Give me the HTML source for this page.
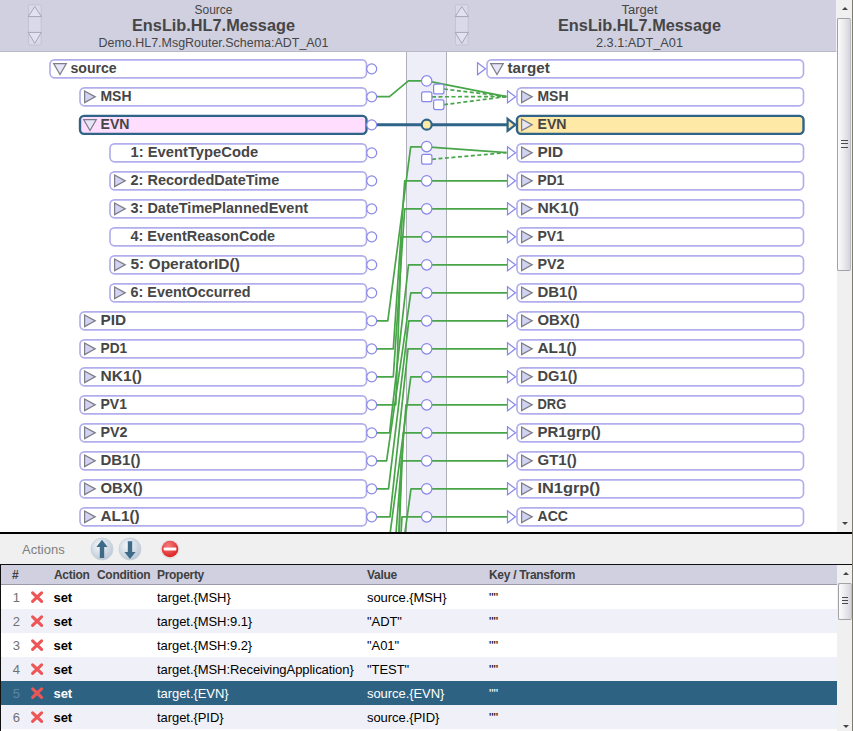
<!DOCTYPE html>
<html><head><meta charset="utf-8"><title>DTL Editor</title>
<style>
html,body{margin:0;padding:0;}
body{width:853px;height:731px;overflow:hidden;background:#fff;position:relative;font-family:"Liberation Sans",sans-serif;}
#diagram{position:absolute;left:0;top:0;width:853px;height:532px;overflow:hidden;background:#fff;}
#diagram svg{position:absolute;left:0;top:0;}
.vsb{position:absolute;left:837px;width:16px;background:#f0f0f0;box-sizing:border-box;}
.thumb{position:absolute;left:0;width:14.3px;border:1px solid #a2a2a6;border-right-color:#bcbcc4;border-radius:2px;box-sizing:border-box;background:linear-gradient(90deg,#fbfbfc 0%,#ececf0 45%,#d4d4da 100%);}
.arr{position:absolute;left:4.5px;width:0;height:0;border-left:3.5px solid transparent;border-right:3.5px solid transparent;}
.arr.up{border-bottom:3.5px solid #444;}
.arr.dn{border-top:3.5px solid #444;}
.grip{position:absolute;left:4px;width:6.5px;height:1.2px;background:#4a4a4a;}
#edge{position:absolute;left:852px;top:0;width:1px;height:731px;background:#7c7c6c;z-index:5;}
#sep{position:absolute;left:0;top:531.5px;width:853px;height:2px;background:#000;}
#bar{position:absolute;left:0;top:533.5px;width:853px;height:31px;background:#f0f0f0;}
#bar .lbl{position:absolute;left:22px;top:8px;font-size:13px;color:#808080;}
#bar svg{position:absolute;}
#tbl{position:absolute;left:0;top:564px;width:853px;height:168px;background:#fff;border-top:1.2px solid #101010;border-left:1px solid #101010;box-sizing:border-box;overflow:hidden;}
#th{position:absolute;left:0;top:0;width:836px;height:18.9px;letter-spacing:-0.3px;background:#d0d0e1;border-bottom:1px solid #9a9aa8;font-weight:bold;font-size:12px;color:#404040;}
#th span{position:absolute;top:2.5px;white-space:nowrap;}
.r{position:absolute;left:0;width:837px;height:24px;font-size:13px;color:#000;background:#fff;}
.r.alt{background:#f0f0f8;}
.r.sel{background:#2e6283;color:#fff;}
.r span{position:absolute;top:5.1px;letter-spacing:-0.06px;white-space:nowrap;}
.r .n{left:0;width:19px;text-align:right;color:#707070;}
.r.sel .n{color:#5f87a2;}
.r .x{position:absolute;left:29.3px;top:5.2px;}
.r .a{left:52.5px;font-weight:bold;}
.r .p{left:156px;}
.r .v{left:366px;}
.r .k{left:488px;}
</style></head><body>
<div id="diagram">
<svg width="853" height="532" viewBox="0 0 853 532">
<rect x="0" y="0" width="836.3" height="51.5" fill="#d0d0e1"/>
<rect x="0" y="51" width="836.3" height="1" fill="#b8b8c8"/>
<rect x="406.5" y="52" width="40" height="480" fill="#eeeef9"/>
<rect x="406" y="52" width="1" height="480" fill="#b0b0b8"/>
<rect x="446" y="52" width="1" height="480" fill="#b0b0b8"/>
<rect x="28.4" y="4.8" width="12.8" height="40.2" rx="1.5" fill="#d9d9e9" stroke="#c2c2d6" stroke-width="1"/>
<path d="M28.2 16.6L34.8 6.6L41.4 16.6Z" fill="#e1e1ef" stroke="#a6a6b8" stroke-width="1"/>
<path d="M28.2 32.4L34.8 43.4L41.4 32.4Z" fill="#e1e1ef" stroke="#a6a6b8" stroke-width="1"/>
<rect x="455.4" y="4.8" width="12.8" height="40.2" rx="1.5" fill="#d9d9e9" stroke="#c2c2d6" stroke-width="1"/>
<path d="M455.2 16.6L461.8 6.6L468.4 16.6Z" fill="#e1e1ef" stroke="#a6a6b8" stroke-width="1"/>
<path d="M455.2 32.4L461.8 43.4L468.4 32.4Z" fill="#e1e1ef" stroke="#a6a6b8" stroke-width="1"/>
<text x="213.5" y="14" text-anchor="middle" font-family="Liberation Sans, sans-serif" font-size="12.5" fill="#464646" textLength="38" lengthAdjust="spacingAndGlyphs">Source</text>
<text x="213.5" y="31" text-anchor="middle" font-family="Liberation Sans, sans-serif" font-size="16.5" font-weight="bold" fill="#464646" textLength="163" lengthAdjust="spacingAndGlyphs">EnsLib.HL7.Message</text>
<text x="213.5" y="47" text-anchor="middle" font-family="Liberation Sans, sans-serif" font-size="12.5" fill="#464646" textLength="230" lengthAdjust="spacingAndGlyphs">Demo.HL7.MsgRouter.Schema:ADT_A01</text>
<text x="639.5" y="14" text-anchor="middle" font-family="Liberation Sans, sans-serif" font-size="12.5" fill="#464646" textLength="36" lengthAdjust="spacingAndGlyphs">Target</text>
<text x="639.5" y="31" text-anchor="middle" font-family="Liberation Sans, sans-serif" font-size="16.5" font-weight="bold" fill="#464646" textLength="163" lengthAdjust="spacingAndGlyphs">EnsLib.HL7.Message</text>
<text x="639.5" y="47" text-anchor="middle" font-family="Liberation Sans, sans-serif" font-size="12.5" fill="#464646" textLength="87" lengthAdjust="spacingAndGlyphs">2.3.1:ADT_A01</text>
<path d="M376.5 96.6L389.5 96.6L408.4 80.9L426.7 80.9" fill="none" stroke="#48a548" stroke-width="1.7" stroke-linejoin="round"/>
<path d="M426.7 80.9L506.5 96.6" fill="none" stroke="#48a548" stroke-width="1.7" stroke-linejoin="round"/>
<path d="M444 89L506.5 96.6" fill="none" stroke="#48a548" stroke-width="1.7" stroke-dasharray="4 2.5" stroke-linejoin="round"/>
<path d="M432 96.8L506.5 96.6" fill="none" stroke="#48a548" stroke-width="1.7" stroke-dasharray="4 2.5" stroke-linejoin="round"/>
<path d="M444 104.7L506.5 96.6" fill="none" stroke="#48a548" stroke-width="1.7" stroke-dasharray="4 2.5" stroke-linejoin="round"/>
<path d="M376.5 124.7L508 124.7" fill="none" stroke="#2f6488" stroke-width="2.9" stroke-linejoin="round"/>
<path d="M376.5 320.8L387.8 320.8L410.7 146.85L426.7 146.85" fill="none" stroke="#48a548" stroke-width="1.7" stroke-linejoin="round"/>
<path d="M426.7 146.85L506.5 152.6" fill="none" stroke="#48a548" stroke-width="1.7" stroke-linejoin="round"/>
<path d="M432 159.3L506.5 152.6" fill="none" stroke="#48a548" stroke-width="1.7" stroke-dasharray="4 2.5" stroke-linejoin="round"/>
<path d="M376.5 348.8L393.3 348.8L404.7 180.85L426.7 180.85" fill="none" stroke="#48a548" stroke-width="1.7" stroke-linejoin="round"/>
<path d="M426.7 180.85L507 180.85" fill="none" stroke="#48a548" stroke-width="1.7" stroke-linejoin="round"/>
<path d="M376.5 376.8L393.3 376.8L404.7 208.85L426.7 208.85" fill="none" stroke="#48a548" stroke-width="1.7" stroke-linejoin="round"/>
<path d="M426.7 208.85L507 208.85" fill="none" stroke="#48a548" stroke-width="1.7" stroke-linejoin="round"/>
<path d="M376.5 404.8L395.8 404.8L401.5 236.85L426.7 236.85" fill="none" stroke="#48a548" stroke-width="1.7" stroke-linejoin="round"/>
<path d="M426.7 236.85L507 236.85" fill="none" stroke="#48a548" stroke-width="1.7" stroke-linejoin="round"/>
<path d="M376.5 432.8L389.6 432.8L408.5 264.85L426.7 264.85" fill="none" stroke="#48a548" stroke-width="1.7" stroke-linejoin="round"/>
<path d="M426.7 264.85L507 264.85" fill="none" stroke="#48a548" stroke-width="1.7" stroke-linejoin="round"/>
<path d="M376.5 460.8L386.6 460.8L410.8 292.85L426.7 292.85" fill="none" stroke="#48a548" stroke-width="1.7" stroke-linejoin="round"/>
<path d="M426.7 292.85L507 292.85" fill="none" stroke="#48a548" stroke-width="1.7" stroke-linejoin="round"/>
<path d="M376.5 488.8L388.5 488.8L408.8 320.85L426.7 320.85" fill="none" stroke="#48a548" stroke-width="1.7" stroke-linejoin="round"/>
<path d="M426.7 320.85L507 320.85" fill="none" stroke="#48a548" stroke-width="1.7" stroke-linejoin="round"/>
<path d="M376.5 516.8L390.0 516.8L408.0 348.85L426.7 348.85" fill="none" stroke="#48a548" stroke-width="1.7" stroke-linejoin="round"/>
<path d="M426.7 348.85L507 348.85" fill="none" stroke="#48a548" stroke-width="1.7" stroke-linejoin="round"/>
<path d="M376.5 544.8L388.6 544.8L410.8 376.85L426.7 376.85" fill="none" stroke="#48a548" stroke-width="1.7" stroke-linejoin="round"/>
<path d="M426.7 376.85L507 376.85" fill="none" stroke="#48a548" stroke-width="1.7" stroke-linejoin="round"/>
<path d="M376.5 572.8L392.9 572.8L406.0 404.85L426.7 404.85" fill="none" stroke="#48a548" stroke-width="1.7" stroke-linejoin="round"/>
<path d="M426.7 404.85L507 404.85" fill="none" stroke="#48a548" stroke-width="1.7" stroke-linejoin="round"/>
<path d="M376.5 600.8L396.3 600.8L403.3 432.85L426.7 432.85" fill="none" stroke="#48a548" stroke-width="1.7" stroke-linejoin="round"/>
<path d="M426.7 432.85L507 432.85" fill="none" stroke="#48a548" stroke-width="1.7" stroke-linejoin="round"/>
<path d="M376.5 628.8L396.0 628.8L401.3 460.85L426.7 460.85" fill="none" stroke="#48a548" stroke-width="1.7" stroke-linejoin="round"/>
<path d="M426.7 460.85L507 460.85" fill="none" stroke="#48a548" stroke-width="1.7" stroke-linejoin="round"/>
<path d="M376.5 656.8L387.8 656.8L411.0 488.85L426.7 488.85" fill="none" stroke="#48a548" stroke-width="1.7" stroke-linejoin="round"/>
<path d="M426.7 488.85L507 488.85" fill="none" stroke="#48a548" stroke-width="1.7" stroke-linejoin="round"/>
<path d="M376.5 684.8L392.0 684.8L402.0 516.85L426.7 516.85" fill="none" stroke="#48a548" stroke-width="1.7" stroke-linejoin="round"/>
<path d="M426.7 516.85L507 516.85" fill="none" stroke="#48a548" stroke-width="1.7" stroke-linejoin="round"/>
<circle cx="426.7" cy="80.9" r="5.2" fill="#ffffff" stroke="#8787ea" stroke-width="1.2"/>
<rect x="433.6" y="84.1" width="10.3" height="9.8" rx="2" fill="#ffffff" stroke="#8787ea" stroke-width="1.2"/>
<rect x="421.6" y="91.9" width="10.3" height="9.8" rx="2" fill="#ffffff" stroke="#8787ea" stroke-width="1.2"/>
<rect x="433.6" y="99.8" width="10.3" height="9.8" rx="2" fill="#ffffff" stroke="#8787ea" stroke-width="1.2"/>
<circle cx="426.7" cy="124.7" r="5" fill="#ffe9a6" stroke="#2f6488" stroke-width="2.2"/>
<circle cx="426.7" cy="146.6" r="5.2" fill="#ffffff" stroke="#8787ea" stroke-width="1.2"/>
<rect x="421.6" y="154.4" width="10.3" height="9.8" rx="2" fill="#ffffff" stroke="#8787ea" stroke-width="1.2"/>
<circle cx="426.7" cy="180.85" r="5.2" fill="#ffffff" stroke="#8787ea" stroke-width="1.2"/>
<circle cx="426.7" cy="208.85" r="5.2" fill="#ffffff" stroke="#8787ea" stroke-width="1.2"/>
<circle cx="426.7" cy="236.85" r="5.2" fill="#ffffff" stroke="#8787ea" stroke-width="1.2"/>
<circle cx="426.7" cy="264.85" r="5.2" fill="#ffffff" stroke="#8787ea" stroke-width="1.2"/>
<circle cx="426.7" cy="292.85" r="5.2" fill="#ffffff" stroke="#8787ea" stroke-width="1.2"/>
<circle cx="426.7" cy="320.85" r="5.2" fill="#ffffff" stroke="#8787ea" stroke-width="1.2"/>
<circle cx="426.7" cy="348.85" r="5.2" fill="#ffffff" stroke="#8787ea" stroke-width="1.2"/>
<circle cx="426.7" cy="376.85" r="5.2" fill="#ffffff" stroke="#8787ea" stroke-width="1.2"/>
<circle cx="426.7" cy="404.85" r="5.2" fill="#ffffff" stroke="#8787ea" stroke-width="1.2"/>
<circle cx="426.7" cy="432.85" r="5.2" fill="#ffffff" stroke="#8787ea" stroke-width="1.2"/>
<circle cx="426.7" cy="460.85" r="5.2" fill="#ffffff" stroke="#8787ea" stroke-width="1.2"/>
<circle cx="426.7" cy="488.85" r="5.2" fill="#ffffff" stroke="#8787ea" stroke-width="1.2"/>
<circle cx="426.7" cy="516.85" r="5.2" fill="#ffffff" stroke="#8787ea" stroke-width="1.2"/>
<rect x="50" y="59.85" width="316.5" height="18" rx="4.5" fill="#ffffff" stroke="#b1aeeb" stroke-width="1.65"/>
<path d="M53.7 63.65L66.3 63.65L60 74.45Z" fill="#e6e6f8" stroke="#7e7e88" stroke-width="1.2"/>
<text x="70.5" y="73.15" font-family="Liberation Sans, sans-serif" font-size="14.5" font-weight="bold" fill="#464646" textLength="46.2" lengthAdjust="spacingAndGlyphs">source</text>
<circle cx="371.7" cy="68.85" r="5" fill="#ffffff" stroke="#8787ea" stroke-width="1.2"/>
<rect x="80" y="87.85" width="286.5" height="18" rx="4.5" fill="#ffffff" stroke="#b1aeeb" stroke-width="1.65"/>
<path d="M84.6 91.05L95.2 96.85L84.6 102.65Z" fill="#d2d2f3" stroke="#7e7e88" stroke-width="1.25" stroke-linejoin="miter"/>
<text x="100.5" y="101.15" font-family="Liberation Sans, sans-serif" font-size="14.5" font-weight="bold" fill="#464646" textLength="31" lengthAdjust="spacingAndGlyphs">MSH</text>
<circle cx="371.7" cy="96.85" r="5" fill="#ffffff" stroke="#8787ea" stroke-width="1.2"/>
<rect x="80" y="115.85" width="286.5" height="18" rx="4" fill="#ffddff" stroke="#2f6488" stroke-width="2.4"/>
<path d="M83.7 119.65L96.3 119.65L90 130.45Z" fill="#e6e6f8" stroke="#7e7e88" stroke-width="1.2"/>
<text x="100.5" y="129.15" font-family="Liberation Sans, sans-serif" font-size="14.5" font-weight="bold" fill="#464646" textLength="29" lengthAdjust="spacingAndGlyphs">EVN</text>
<circle cx="371.7" cy="124.85" r="5" fill="#ffffff" stroke="#8787ea" stroke-width="1.2"/>
<rect x="110" y="143.85" width="256.5" height="18" rx="4.5" fill="#ffffff" stroke="#b1aeeb" stroke-width="1.65"/>
<text x="130.5" y="157.15" font-family="Liberation Sans, sans-serif" font-size="14.5" font-weight="bold" fill="#464646" textLength="127.7" lengthAdjust="spacingAndGlyphs">1: EventTypeCode</text>
<circle cx="371.7" cy="152.85" r="5" fill="#ffffff" stroke="#8787ea" stroke-width="1.2"/>
<rect x="110" y="171.85" width="256.5" height="18" rx="4.5" fill="#ffffff" stroke="#b1aeeb" stroke-width="1.65"/>
<path d="M114.6 175.05L125.2 180.85L114.6 186.65Z" fill="#d2d2f3" stroke="#7e7e88" stroke-width="1.25" stroke-linejoin="miter"/>
<text x="130.5" y="185.15" font-family="Liberation Sans, sans-serif" font-size="14.5" font-weight="bold" fill="#464646" textLength="148.8" lengthAdjust="spacingAndGlyphs">2: RecordedDateTime</text>
<circle cx="371.7" cy="180.85" r="5" fill="#ffffff" stroke="#8787ea" stroke-width="1.2"/>
<rect x="110" y="199.85" width="256.5" height="18" rx="4.5" fill="#ffffff" stroke="#b1aeeb" stroke-width="1.65"/>
<path d="M114.6 203.05L125.2 208.85L114.6 214.65Z" fill="#d2d2f3" stroke="#7e7e88" stroke-width="1.25" stroke-linejoin="miter"/>
<text x="130.5" y="213.15" font-family="Liberation Sans, sans-serif" font-size="14.5" font-weight="bold" fill="#464646" textLength="177.6" lengthAdjust="spacingAndGlyphs">3: DateTimePlannedEvent</text>
<circle cx="371.7" cy="208.85" r="5" fill="#ffffff" stroke="#8787ea" stroke-width="1.2"/>
<rect x="110" y="227.85" width="256.5" height="18" rx="4.5" fill="#ffffff" stroke="#b1aeeb" stroke-width="1.65"/>
<text x="130.5" y="241.15" font-family="Liberation Sans, sans-serif" font-size="14.5" font-weight="bold" fill="#464646" textLength="144.6" lengthAdjust="spacingAndGlyphs">4: EventReasonCode</text>
<circle cx="371.7" cy="236.85" r="5" fill="#ffffff" stroke="#8787ea" stroke-width="1.2"/>
<rect x="110" y="255.85" width="256.5" height="18" rx="4.5" fill="#ffffff" stroke="#b1aeeb" stroke-width="1.65"/>
<path d="M114.6 259.05L125.2 264.85L114.6 270.65Z" fill="#d2d2f3" stroke="#7e7e88" stroke-width="1.25" stroke-linejoin="miter"/>
<text x="130.5" y="269.15" font-family="Liberation Sans, sans-serif" font-size="14.5" font-weight="bold" fill="#464646" textLength="109.4" lengthAdjust="spacingAndGlyphs">5: OperatorID()</text>
<circle cx="371.7" cy="264.85" r="5" fill="#ffffff" stroke="#8787ea" stroke-width="1.2"/>
<rect x="110" y="283.85" width="256.5" height="18" rx="4.5" fill="#ffffff" stroke="#b1aeeb" stroke-width="1.65"/>
<path d="M114.6 287.05L125.2 292.85L114.6 298.65Z" fill="#d2d2f3" stroke="#7e7e88" stroke-width="1.25" stroke-linejoin="miter"/>
<text x="130.5" y="297.15" font-family="Liberation Sans, sans-serif" font-size="14.5" font-weight="bold" fill="#464646" textLength="120" lengthAdjust="spacingAndGlyphs">6: EventOccurred</text>
<circle cx="371.7" cy="292.85" r="5" fill="#ffffff" stroke="#8787ea" stroke-width="1.2"/>
<rect x="80" y="311.85" width="286.5" height="18" rx="4.5" fill="#ffffff" stroke="#b1aeeb" stroke-width="1.65"/>
<path d="M84.6 315.05L95.2 320.85L84.6 326.65Z" fill="#d2d2f3" stroke="#7e7e88" stroke-width="1.25" stroke-linejoin="miter"/>
<text x="100.5" y="325.15" font-family="Liberation Sans, sans-serif" font-size="14.5" font-weight="bold" fill="#464646" textLength="25.6" lengthAdjust="spacingAndGlyphs">PID</text>
<circle cx="371.7" cy="320.85" r="5" fill="#ffffff" stroke="#8787ea" stroke-width="1.2"/>
<rect x="80" y="339.85" width="286.5" height="18" rx="4.5" fill="#ffffff" stroke="#b1aeeb" stroke-width="1.65"/>
<path d="M84.6 343.05L95.2 348.85L84.6 354.65Z" fill="#d2d2f3" stroke="#7e7e88" stroke-width="1.25" stroke-linejoin="miter"/>
<text x="100.5" y="353.15" font-family="Liberation Sans, sans-serif" font-size="14.5" font-weight="bold" fill="#464646" textLength="26.7" lengthAdjust="spacingAndGlyphs">PD1</text>
<circle cx="371.7" cy="348.85" r="5" fill="#ffffff" stroke="#8787ea" stroke-width="1.2"/>
<rect x="80" y="367.85" width="286.5" height="18" rx="4.5" fill="#ffffff" stroke="#b1aeeb" stroke-width="1.65"/>
<path d="M84.6 371.05L95.2 376.85L84.6 382.65Z" fill="#d2d2f3" stroke="#7e7e88" stroke-width="1.25" stroke-linejoin="miter"/>
<text x="100.5" y="381.15" font-family="Liberation Sans, sans-serif" font-size="14.5" font-weight="bold" fill="#464646" textLength="41.5" lengthAdjust="spacingAndGlyphs">NK1()</text>
<circle cx="371.7" cy="376.85" r="5" fill="#ffffff" stroke="#8787ea" stroke-width="1.2"/>
<rect x="80" y="395.85" width="286.5" height="18" rx="4.5" fill="#ffffff" stroke="#b1aeeb" stroke-width="1.65"/>
<path d="M84.6 399.05L95.2 404.85L84.6 410.65Z" fill="#d2d2f3" stroke="#7e7e88" stroke-width="1.25" stroke-linejoin="miter"/>
<text x="100.5" y="409.15" font-family="Liberation Sans, sans-serif" font-size="14.5" font-weight="bold" fill="#464646" textLength="26.5" lengthAdjust="spacingAndGlyphs">PV1</text>
<circle cx="371.7" cy="404.85" r="5" fill="#ffffff" stroke="#8787ea" stroke-width="1.2"/>
<rect x="80" y="423.85" width="286.5" height="18" rx="4.5" fill="#ffffff" stroke="#b1aeeb" stroke-width="1.65"/>
<path d="M84.6 427.05L95.2 432.85L84.6 438.65Z" fill="#d2d2f3" stroke="#7e7e88" stroke-width="1.25" stroke-linejoin="miter"/>
<text x="100.5" y="437.15" font-family="Liberation Sans, sans-serif" font-size="14.5" font-weight="bold" fill="#464646" textLength="27" lengthAdjust="spacingAndGlyphs">PV2</text>
<circle cx="371.7" cy="432.85" r="5" fill="#ffffff" stroke="#8787ea" stroke-width="1.2"/>
<rect x="80" y="451.85" width="286.5" height="18" rx="4.5" fill="#ffffff" stroke="#b1aeeb" stroke-width="1.65"/>
<path d="M84.6 455.05L95.2 460.85L84.6 466.65Z" fill="#d2d2f3" stroke="#7e7e88" stroke-width="1.25" stroke-linejoin="miter"/>
<text x="100.5" y="465.15" font-family="Liberation Sans, sans-serif" font-size="14.5" font-weight="bold" fill="#464646" textLength="39.9" lengthAdjust="spacingAndGlyphs">DB1()</text>
<circle cx="371.7" cy="460.85" r="5" fill="#ffffff" stroke="#8787ea" stroke-width="1.2"/>
<rect x="80" y="479.85" width="286.5" height="18" rx="4.5" fill="#ffffff" stroke="#b1aeeb" stroke-width="1.65"/>
<path d="M84.6 483.05L95.2 488.85L84.6 494.65Z" fill="#d2d2f3" stroke="#7e7e88" stroke-width="1.25" stroke-linejoin="miter"/>
<text x="100.5" y="493.15" font-family="Liberation Sans, sans-serif" font-size="14.5" font-weight="bold" fill="#464646" textLength="42.2" lengthAdjust="spacingAndGlyphs">OBX()</text>
<circle cx="371.7" cy="488.85" r="5" fill="#ffffff" stroke="#8787ea" stroke-width="1.2"/>
<rect x="80" y="507.85" width="286.5" height="18" rx="4.5" fill="#ffffff" stroke="#b1aeeb" stroke-width="1.65"/>
<path d="M84.6 511.05L95.2 516.85L84.6 522.65Z" fill="#d2d2f3" stroke="#7e7e88" stroke-width="1.25" stroke-linejoin="miter"/>
<text x="100.5" y="521.15" font-family="Liberation Sans, sans-serif" font-size="14.5" font-weight="bold" fill="#464646" textLength="39.2" lengthAdjust="spacingAndGlyphs">AL1()</text>
<circle cx="371.7" cy="516.85" r="5" fill="#ffffff" stroke="#8787ea" stroke-width="1.2"/>
<rect x="487" y="59.85" width="316.5" height="18" rx="4.5" fill="#ffffff" stroke="#b1aeeb" stroke-width="1.65"/>
<path d="M490.7 63.65L503.3 63.65L497 74.45Z" fill="#e6e6f8" stroke="#7e7e88" stroke-width="1.2"/>
<text x="507.5" y="73.15" font-family="Liberation Sans, sans-serif" font-size="14.5" font-weight="bold" fill="#464646" textLength="42.2" lengthAdjust="spacingAndGlyphs">target</text>
<path d="M477.5 62.85L485.5 68.85L477.5 74.85Z" fill="#ffffff" stroke="#8787ea" stroke-width="1.2"/>
<rect x="517" y="87.85" width="286.5" height="18" rx="4.5" fill="#ffffff" stroke="#b1aeeb" stroke-width="1.65"/>
<path d="M521.6 91.05L532.2 96.85L521.6 102.65Z" fill="#d2d2f3" stroke="#7e7e88" stroke-width="1.25" stroke-linejoin="miter"/>
<text x="537.5" y="101.15" font-family="Liberation Sans, sans-serif" font-size="14.5" font-weight="bold" fill="#464646" textLength="31" lengthAdjust="spacingAndGlyphs">MSH</text>
<path d="M507.5 90.85L515.5 96.85L507.5 102.85Z" fill="#ffffff" stroke="#8787ea" stroke-width="1.2"/>
<rect x="517" y="115.85" width="286.5" height="18" rx="4" fill="#ffe9a6" stroke="#2f6488" stroke-width="2.4"/>
<path d="M521.6 119.05L532.2 124.85L521.6 130.65Z" fill="#e6e6f8" stroke="#7e7e88" stroke-width="1.25" stroke-linejoin="miter"/>
<text x="537.5" y="129.15" font-family="Liberation Sans, sans-serif" font-size="14.5" font-weight="bold" fill="#464646" textLength="29" lengthAdjust="spacingAndGlyphs">EVN</text>
<path d="M507.6 118.85L515.4 124.85L507.6 130.85Z" fill="#ffe9a6" stroke="#2f6488" stroke-width="2.2"/>
<rect x="517" y="143.85" width="286.5" height="18" rx="4.5" fill="#ffffff" stroke="#b1aeeb" stroke-width="1.65"/>
<path d="M521.6 147.05L532.2 152.85L521.6 158.65Z" fill="#d2d2f3" stroke="#7e7e88" stroke-width="1.25" stroke-linejoin="miter"/>
<text x="537.5" y="157.15" font-family="Liberation Sans, sans-serif" font-size="14.5" font-weight="bold" fill="#464646" textLength="25.6" lengthAdjust="spacingAndGlyphs">PID</text>
<path d="M507.5 146.85L515.5 152.85L507.5 158.85Z" fill="#ffffff" stroke="#8787ea" stroke-width="1.2"/>
<rect x="517" y="171.85" width="286.5" height="18" rx="4.5" fill="#ffffff" stroke="#b1aeeb" stroke-width="1.65"/>
<path d="M521.6 175.05L532.2 180.85L521.6 186.65Z" fill="#d2d2f3" stroke="#7e7e88" stroke-width="1.25" stroke-linejoin="miter"/>
<text x="537.5" y="185.15" font-family="Liberation Sans, sans-serif" font-size="14.5" font-weight="bold" fill="#464646" textLength="26.7" lengthAdjust="spacingAndGlyphs">PD1</text>
<path d="M507.5 174.85L515.5 180.85L507.5 186.85Z" fill="#ffffff" stroke="#8787ea" stroke-width="1.2"/>
<rect x="517" y="199.85" width="286.5" height="18" rx="4.5" fill="#ffffff" stroke="#b1aeeb" stroke-width="1.65"/>
<path d="M521.6 203.05L532.2 208.85L521.6 214.65Z" fill="#d2d2f3" stroke="#7e7e88" stroke-width="1.25" stroke-linejoin="miter"/>
<text x="537.5" y="213.15" font-family="Liberation Sans, sans-serif" font-size="14.5" font-weight="bold" fill="#464646" textLength="41.5" lengthAdjust="spacingAndGlyphs">NK1()</text>
<path d="M507.5 202.85L515.5 208.85L507.5 214.85Z" fill="#ffffff" stroke="#8787ea" stroke-width="1.2"/>
<rect x="517" y="227.85" width="286.5" height="18" rx="4.5" fill="#ffffff" stroke="#b1aeeb" stroke-width="1.65"/>
<path d="M521.6 231.05L532.2 236.85L521.6 242.65Z" fill="#d2d2f3" stroke="#7e7e88" stroke-width="1.25" stroke-linejoin="miter"/>
<text x="537.5" y="241.15" font-family="Liberation Sans, sans-serif" font-size="14.5" font-weight="bold" fill="#464646" textLength="26.5" lengthAdjust="spacingAndGlyphs">PV1</text>
<path d="M507.5 230.85L515.5 236.85L507.5 242.85Z" fill="#ffffff" stroke="#8787ea" stroke-width="1.2"/>
<rect x="517" y="255.85" width="286.5" height="18" rx="4.5" fill="#ffffff" stroke="#b1aeeb" stroke-width="1.65"/>
<path d="M521.6 259.05L532.2 264.85L521.6 270.65Z" fill="#d2d2f3" stroke="#7e7e88" stroke-width="1.25" stroke-linejoin="miter"/>
<text x="537.5" y="269.15" font-family="Liberation Sans, sans-serif" font-size="14.5" font-weight="bold" fill="#464646" textLength="27" lengthAdjust="spacingAndGlyphs">PV2</text>
<path d="M507.5 258.85L515.5 264.85L507.5 270.85Z" fill="#ffffff" stroke="#8787ea" stroke-width="1.2"/>
<rect x="517" y="283.85" width="286.5" height="18" rx="4.5" fill="#ffffff" stroke="#b1aeeb" stroke-width="1.65"/>
<path d="M521.6 287.05L532.2 292.85L521.6 298.65Z" fill="#d2d2f3" stroke="#7e7e88" stroke-width="1.25" stroke-linejoin="miter"/>
<text x="537.5" y="297.15" font-family="Liberation Sans, sans-serif" font-size="14.5" font-weight="bold" fill="#464646" textLength="39.9" lengthAdjust="spacingAndGlyphs">DB1()</text>
<path d="M507.5 286.85L515.5 292.85L507.5 298.85Z" fill="#ffffff" stroke="#8787ea" stroke-width="1.2"/>
<rect x="517" y="311.85" width="286.5" height="18" rx="4.5" fill="#ffffff" stroke="#b1aeeb" stroke-width="1.65"/>
<path d="M521.6 315.05L532.2 320.85L521.6 326.65Z" fill="#d2d2f3" stroke="#7e7e88" stroke-width="1.25" stroke-linejoin="miter"/>
<text x="537.5" y="325.15" font-family="Liberation Sans, sans-serif" font-size="14.5" font-weight="bold" fill="#464646" textLength="42.2" lengthAdjust="spacingAndGlyphs">OBX()</text>
<path d="M507.5 314.85L515.5 320.85L507.5 326.85Z" fill="#ffffff" stroke="#8787ea" stroke-width="1.2"/>
<rect x="517" y="339.85" width="286.5" height="18" rx="4.5" fill="#ffffff" stroke="#b1aeeb" stroke-width="1.65"/>
<path d="M521.6 343.05L532.2 348.85L521.6 354.65Z" fill="#d2d2f3" stroke="#7e7e88" stroke-width="1.25" stroke-linejoin="miter"/>
<text x="537.5" y="353.15" font-family="Liberation Sans, sans-serif" font-size="14.5" font-weight="bold" fill="#464646" textLength="39.2" lengthAdjust="spacingAndGlyphs">AL1()</text>
<path d="M507.5 342.85L515.5 348.85L507.5 354.85Z" fill="#ffffff" stroke="#8787ea" stroke-width="1.2"/>
<rect x="517" y="367.85" width="286.5" height="18" rx="4.5" fill="#ffffff" stroke="#b1aeeb" stroke-width="1.65"/>
<path d="M521.6 371.05L532.2 376.85L521.6 382.65Z" fill="#d2d2f3" stroke="#7e7e88" stroke-width="1.25" stroke-linejoin="miter"/>
<text x="537.5" y="381.15" font-family="Liberation Sans, sans-serif" font-size="14.5" font-weight="bold" fill="#464646" textLength="39.9" lengthAdjust="spacingAndGlyphs">DG1()</text>
<path d="M507.5 370.85L515.5 376.85L507.5 382.85Z" fill="#ffffff" stroke="#8787ea" stroke-width="1.2"/>
<rect x="517" y="395.85" width="286.5" height="18" rx="4.5" fill="#ffffff" stroke="#b1aeeb" stroke-width="1.65"/>
<path d="M521.6 399.05L532.2 404.85L521.6 410.65Z" fill="#d2d2f3" stroke="#7e7e88" stroke-width="1.25" stroke-linejoin="miter"/>
<text x="537.5" y="409.15" font-family="Liberation Sans, sans-serif" font-size="14.5" font-weight="bold" fill="#464646" textLength="28.8" lengthAdjust="spacingAndGlyphs">DRG</text>
<path d="M507.5 398.85L515.5 404.85L507.5 410.85Z" fill="#ffffff" stroke="#8787ea" stroke-width="1.2"/>
<rect x="517" y="423.85" width="286.5" height="18" rx="4.5" fill="#ffffff" stroke="#b1aeeb" stroke-width="1.65"/>
<path d="M521.6 427.05L532.2 432.85L521.6 438.65Z" fill="#d2d2f3" stroke="#7e7e88" stroke-width="1.25" stroke-linejoin="miter"/>
<text x="537.5" y="437.15" font-family="Liberation Sans, sans-serif" font-size="14.5" font-weight="bold" fill="#464646" textLength="63.3" lengthAdjust="spacingAndGlyphs">PR1grp()</text>
<path d="M507.5 426.85L515.5 432.85L507.5 438.85Z" fill="#ffffff" stroke="#8787ea" stroke-width="1.2"/>
<rect x="517" y="451.85" width="286.5" height="18" rx="4.5" fill="#ffffff" stroke="#b1aeeb" stroke-width="1.65"/>
<path d="M521.6 455.05L532.2 460.85L521.6 466.65Z" fill="#d2d2f3" stroke="#7e7e88" stroke-width="1.25" stroke-linejoin="miter"/>
<text x="537.5" y="465.15" font-family="Liberation Sans, sans-serif" font-size="14.5" font-weight="bold" fill="#464646" textLength="39.2" lengthAdjust="spacingAndGlyphs">GT1()</text>
<path d="M507.5 454.85L515.5 460.85L507.5 466.85Z" fill="#ffffff" stroke="#8787ea" stroke-width="1.2"/>
<rect x="517" y="479.85" width="286.5" height="18" rx="4.5" fill="#ffffff" stroke="#b1aeeb" stroke-width="1.65"/>
<path d="M521.6 483.05L532.2 488.85L521.6 494.65Z" fill="#d2d2f3" stroke="#7e7e88" stroke-width="1.25" stroke-linejoin="miter"/>
<text x="537.5" y="493.15" font-family="Liberation Sans, sans-serif" font-size="14.5" font-weight="bold" fill="#464646" textLength="62.6" lengthAdjust="spacingAndGlyphs">IN1grp()</text>
<path d="M507.5 482.85L515.5 488.85L507.5 494.85Z" fill="#ffffff" stroke="#8787ea" stroke-width="1.2"/>
<rect x="517" y="507.85" width="286.5" height="18" rx="4.5" fill="#ffffff" stroke="#b1aeeb" stroke-width="1.65"/>
<path d="M521.6 511.05L532.2 516.85L521.6 522.65Z" fill="#d2d2f3" stroke="#7e7e88" stroke-width="1.25" stroke-linejoin="miter"/>
<text x="537.5" y="521.15" font-family="Liberation Sans, sans-serif" font-size="14.5" font-weight="bold" fill="#464646" textLength="30.5" lengthAdjust="spacingAndGlyphs">ACC</text>
<path d="M507.5 510.85L515.5 516.85L507.5 522.85Z" fill="#ffffff" stroke="#8787ea" stroke-width="1.2"/>
</svg>
<div class="vsb" style="top:0;height:532px;">
<div class="arr up" style="top:7px"></div>
<div class="thumb" style="top:17.7px;height:253px;"></div>
<div class="grip" style="top:140px"></div><div class="grip" style="top:143.3px"></div><div class="grip" style="top:146.5px"></div>
<div class="arr dn" style="top:522px;left:5px"></div>
</div>
</div>
<div id="sep"></div>
<div id="edge"></div>
<div id="bar"><span class="lbl">Actions</span>
<svg style="left:89.8px;top:3px" width="24" height="24" viewBox="0 0 24 24"><defs><radialGradient id="g1" cx="0.4" cy="0.35" r="0.7"><stop offset="0" stop-color="#f4f8fc"/><stop offset="1" stop-color="#b8c6d4"/></radialGradient></defs><circle cx="12" cy="12" r="11" fill="url(#g1)" stroke="#c8d0d8" stroke-width="0.8"/><path d="M12 2.8L17.6 10H14.2V21H9.8V10H6.4Z" fill="#3f6a88"/></svg>
<svg style="left:117.8px;top:3px" width="24" height="24" viewBox="0 0 24 24"><circle cx="12" cy="12" r="11" fill="url(#g1)" stroke="#c8d0d8" stroke-width="0.8"/><path d="M12 22L17.6 15H14.2V4.2H9.8V15H6.4Z" fill="#3f6a88"/></svg>
<svg style="left:159px;top:4.1px" width="22" height="22" viewBox="0 0 22 22"><defs><radialGradient id="g2" cx="0.4" cy="0.3" r="0.75"><stop offset="0" stop-color="#f57c7c"/><stop offset="1" stop-color="#dc1c1c"/></radialGradient></defs><circle cx="11" cy="11.3" r="9.6" fill="#d8d8d8" opacity="0.55"/><circle cx="11" cy="11" r="8.3" fill="url(#g2)"/><rect x="4.7" y="9.5" width="12.6" height="3" rx="0.8" fill="#fff"/></svg>
</div>
<div id="tbl">
<div id="th"><span style="left:11px">#</span><span style="left:53px">Action</span><span style="left:96px">Condition</span><span style="left:156px">Property</span><span style="left:366px">Value</span><span style="left:488px">Key / Transform</span></div>
<div class="r" style="top:19.9px"><span class="n">1</span><svg class="x" width="14" height="14" viewBox="0 0 14 14"><path d="M2.6 2.8L11.6 11.4M11.6 2.8L2.6 11.4" stroke="#ec5656" stroke-width="3.1" stroke-linecap="round" fill="none"/></svg><span class="a">set</span><span class="p">target.{MSH}</span><span class="v">source.{MSH}</span><span class="k">""</span></div>
<div class="r alt" style="top:43.9px"><span class="n">2</span><svg class="x" width="14" height="14" viewBox="0 0 14 14"><path d="M2.6 2.8L11.6 11.4M11.6 2.8L2.6 11.4" stroke="#ec5656" stroke-width="3.1" stroke-linecap="round" fill="none"/></svg><span class="a">set</span><span class="p">target.{MSH:9.1}</span><span class="v">"ADT"</span><span class="k">""</span></div>
<div class="r" style="top:67.9px"><span class="n">3</span><svg class="x" width="14" height="14" viewBox="0 0 14 14"><path d="M2.6 2.8L11.6 11.4M11.6 2.8L2.6 11.4" stroke="#ec5656" stroke-width="3.1" stroke-linecap="round" fill="none"/></svg><span class="a">set</span><span class="p">target.{MSH:9.2}</span><span class="v">"A01"</span><span class="k">""</span></div>
<div class="r alt" style="top:91.9px"><span class="n">4</span><svg class="x" width="14" height="14" viewBox="0 0 14 14"><path d="M2.6 2.8L11.6 11.4M11.6 2.8L2.6 11.4" stroke="#ec5656" stroke-width="3.1" stroke-linecap="round" fill="none"/></svg><span class="a">set</span><span class="p">target.{MSH:ReceivingApplication}</span><span class="v">"TEST"</span><span class="k">""</span></div>
<div class="r sel" style="top:115.9px"><span class="n">5</span><svg class="x" width="14" height="14" viewBox="0 0 14 14"><path d="M2.6 2.8L11.6 11.4M11.6 2.8L2.6 11.4" stroke="#ec5656" stroke-width="3.1" stroke-linecap="round" fill="none"/></svg><span class="a">set</span><span class="p">target.{EVN}</span><span class="v">source.{EVN}</span><span class="k">""</span></div>
<div class="r alt" style="top:139.9px"><span class="n">6</span><svg class="x" width="14" height="14" viewBox="0 0 14 14"><path d="M2.6 2.8L11.6 11.4M11.6 2.8L2.6 11.4" stroke="#ec5656" stroke-width="3.1" stroke-linecap="round" fill="none"/></svg><span class="a">set</span><span class="p">target.{PID}</span><span class="v">source.{PID}</span><span class="k">""</span></div>

<div class="vsb" style="top:0;height:168px;left:835.6px;width:17px;">
<div class="arr up" style="top:7.2px;left:6.5px"></div>
<div class="thumb" style="top:18.2px;height:36.5px;left:1.6px;width:14px"></div>
<div class="grip" style="top:31.8px;left:5.3px"></div><div class="grip" style="top:35.1px;left:5.3px"></div><div class="grip" style="top:38.3px;left:5.3px"></div>
<div class="arr dn" style="top:159.5px;left:6.5px"></div>
</div>
</div>
</body></html>
